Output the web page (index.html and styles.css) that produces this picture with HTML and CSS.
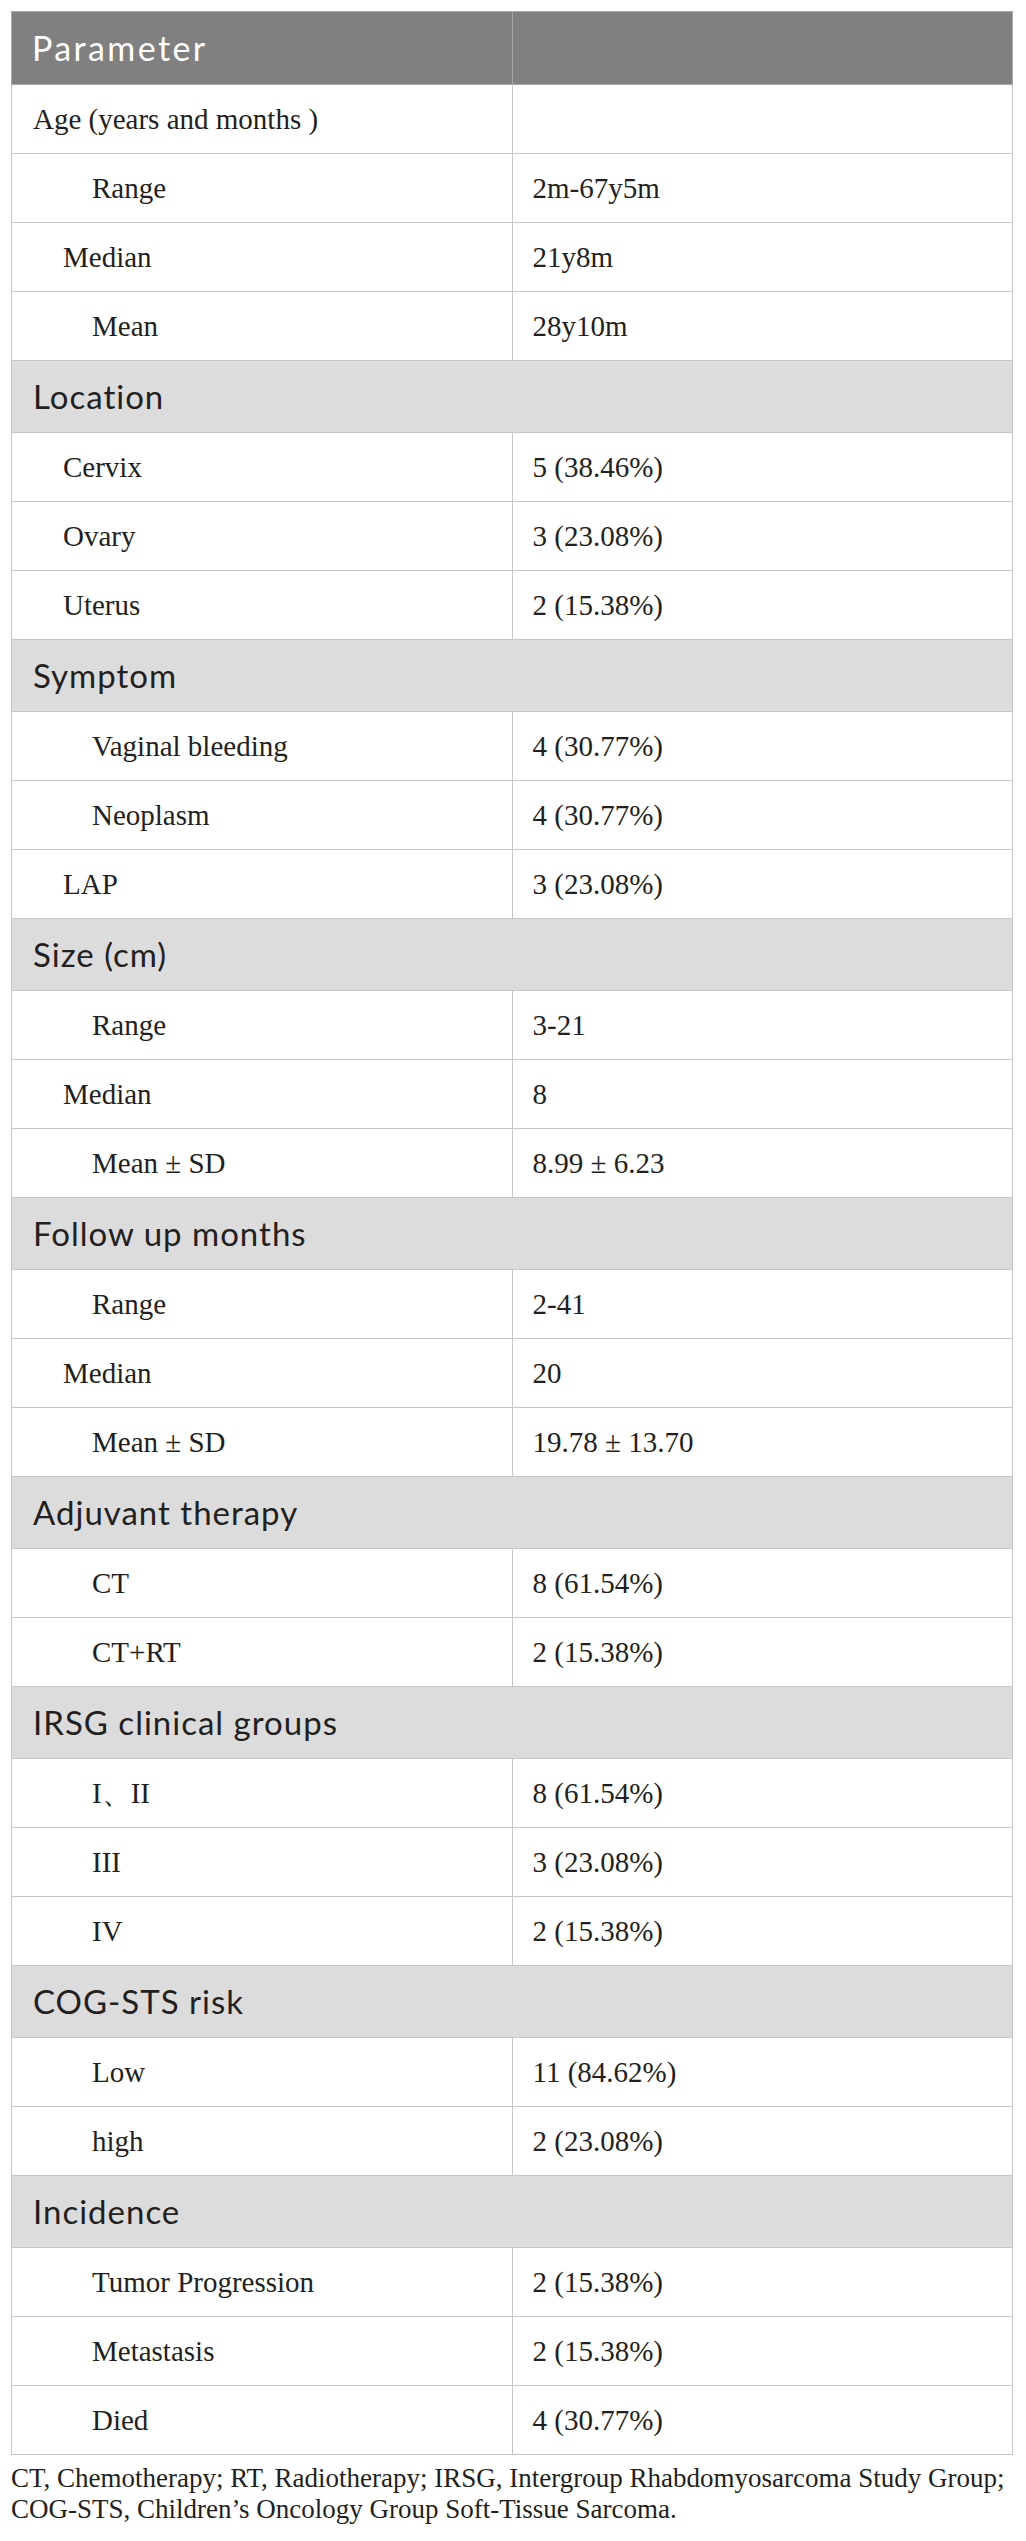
FILE: index.html
```html
<!DOCTYPE html>
<html lang="en">
<head>
<meta charset="utf-8">
<title>Patient characteristics</title>
<link rel="stylesheet" href="styles.css">
</head>
<body>
<div class="page">
  <table class="data-table">
    <thead>
      <tr class="head-row">
        <th>Parameter</th>
        <th></th>
      </tr>
    </thead>
    <tbody>
      <tr><td class="l0">Age (years and months )</td><td></td></tr>
      <tr><td class="l2">Range</td><td>2m-67y5m</td></tr>
      <tr><td class="l1">Median</td><td>21y8m</td></tr>
      <tr><td class="l2">Mean</td><td>28y10m</td></tr>

      <tr class="section"><td colspan="2">Location</td></tr>
      <tr><td class="l1">Cervix</td><td>5 (38.46%)</td></tr>
      <tr><td class="l1">Ovary</td><td>3 (23.08%)</td></tr>
      <tr><td class="l1">Uterus</td><td>2 (15.38%)</td></tr>

      <tr class="section"><td colspan="2">Symptom</td></tr>
      <tr><td class="l2">Vaginal bleeding</td><td>4 (30.77%)</td></tr>
      <tr><td class="l2">Neoplasm</td><td>4 (30.77%)</td></tr>
      <tr><td class="l1">LAP</td><td>3 (23.08%)</td></tr>

      <tr class="section"><td colspan="2">Size (cm)</td></tr>
      <tr><td class="l2">Range</td><td>3-21</td></tr>
      <tr><td class="l1">Median</td><td>8</td></tr>
      <tr><td class="l2">Mean ± SD</td><td>8.99 ± 6.23</td></tr>

      <tr class="section"><td colspan="2">Follow up months</td></tr>
      <tr><td class="l2">Range</td><td>2-41</td></tr>
      <tr><td class="l1">Median</td><td>20</td></tr>
      <tr><td class="l2">Mean ± SD</td><td>19.78 ± 13.70</td></tr>

      <tr class="section"><td colspan="2">Adjuvant therapy</td></tr>
      <tr><td class="l2">CT</td><td>8 (61.54%)</td></tr>
      <tr><td class="l2">CT+RT</td><td>2 (15.38%)</td></tr>

      <tr class="section"><td colspan="2">IRSG clinical groups</td></tr>
      <tr><td class="l2">I、II</td><td>8 (61.54%)</td></tr>
      <tr><td class="l2">III</td><td>3 (23.08%)</td></tr>
      <tr><td class="l2">IV</td><td>2 (15.38%)</td></tr>

      <tr class="section"><td colspan="2">COG-STS risk</td></tr>
      <tr><td class="l2">Low</td><td>11 (84.62%)</td></tr>
      <tr><td class="l2">high</td><td>2 (23.08%)</td></tr>

      <tr class="section"><td colspan="2">Incidence</td></tr>
      <tr><td class="l2">Tumor Progression</td><td>2 (15.38%)</td></tr>
      <tr><td class="l2">Metastasis</td><td>2 (15.38%)</td></tr>
      <tr><td class="l2">Died</td><td>4 (30.77%)</td></tr>
    </tbody>
  </table>
  <p class="footnote">CT, Chemotherapy; RT, Radiotherapy; IRSG, Intergroup Rhabdomyosarcoma Study Group;<br>COG-STS, Children’s Oncology Group Soft-Tissue Sarcoma.</p>
</div>
</body>
</html>
```
FILE: styles.css
```css
html, body {
  margin: 0;
  padding: 0;
  background: #ffffff;
}

.page {
  padding: 11px 0 0 11px;
}

.data-table {
  width: 1002px;
  border-collapse: collapse;
  table-layout: fixed;
  border: 1px solid #c6c6c6;
  font-family: "Liberation Serif", "Times New Roman", serif;
  font-size: 29px;
  color: #231f20;
}

.data-table td,
.data-table th {
  border: 1px solid #c6c6c6;
  text-align: left;
  vertical-align: middle;
  width: 50%;
}

.data-table td {
  padding: 17px 20px 17px 20px;
  line-height: 34px;
}

.head-row th {
  background: #808080;
  color: #ffffff;
  font-family: Lato, "Open Sans", sans-serif;
  font-weight: 400;
  font-size: 34px;
  letter-spacing: 2.4px;
  line-height: 36px;
  padding: 18px 20px 18px 20px;
  border-color: #a9a9a9;
}

.data-table td.l0 { padding-left: 21px; }
.data-table td.l1 { padding-left: 51px; }
.data-table td.l2 { padding-left: 80px; }

.section td {
  background: #dcdcdc;
  font-family: Lato, "Open Sans", sans-serif;
  font-size: 33px;
  letter-spacing: 1px;
  line-height: 34px;
  padding: 18px 20px 19px 21px;
  color: #231f20;
}

.footnote {
  margin: 8px 0 0 0;
  font-family: "Liberation Serif", "Times New Roman", serif;
  font-size: 27px;
  line-height: 31px;
  color: #231f20;
  white-space: nowrap;
}
```
